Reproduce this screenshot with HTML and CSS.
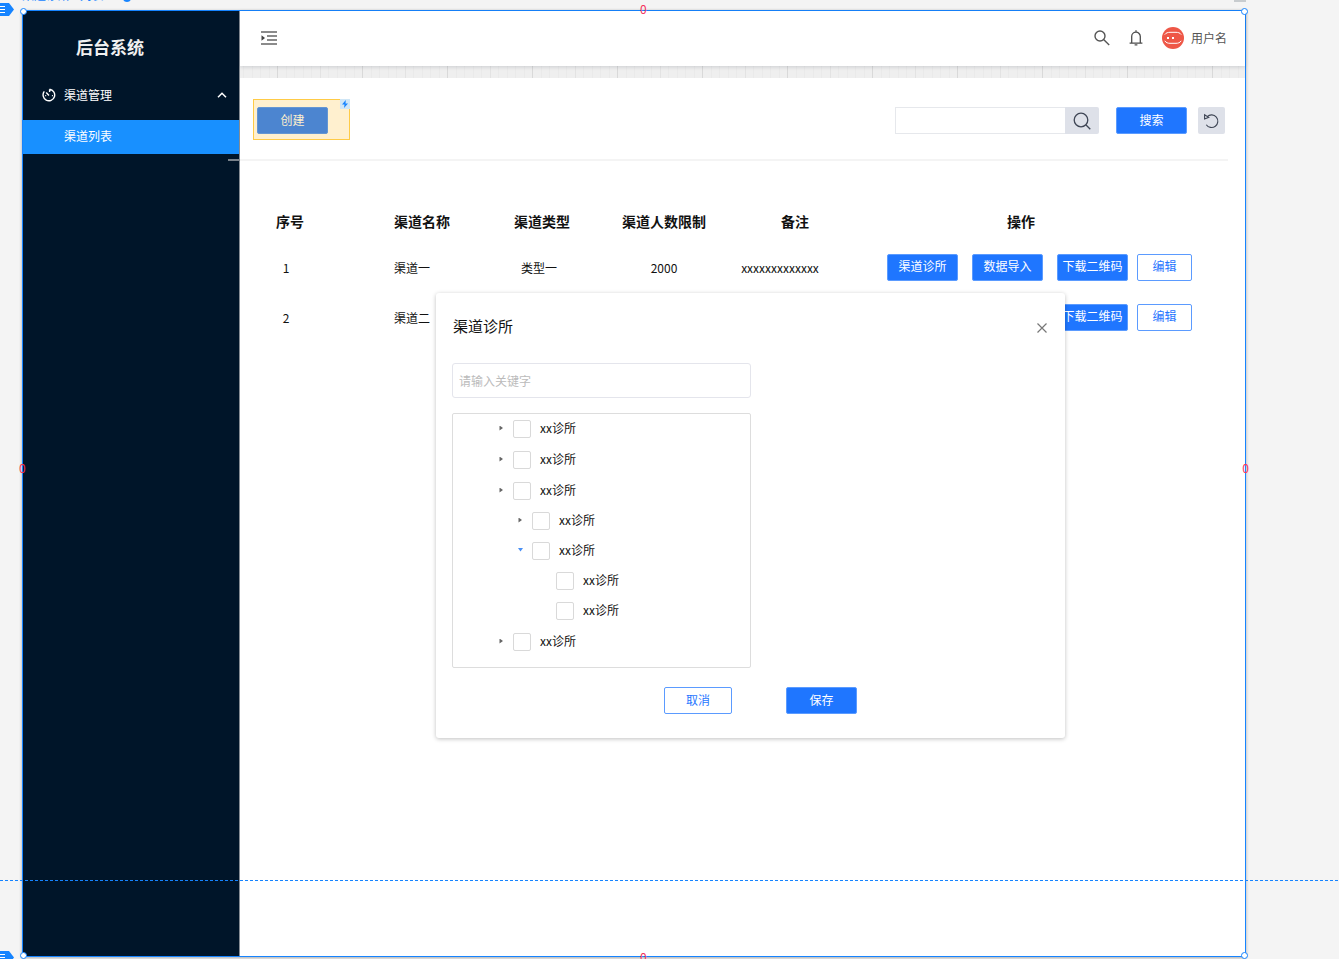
FILE: index.html
```html
<!DOCTYPE html>
<html lang="zh-CN">
<head>
<meta charset="utf-8">
<title>后台系统</title>
<link rel="stylesheet" href="styles.css">
</head>
<body>
<div class="workspace">
  <div class="page-label">渠道诊所 - 列表 <span class="page-dot"></span></div>
  <span class="page-tab"></span>

  <div class="artboard">
    <aside class="sidebar">
      <h1 class="brand">后台系统</h1>
      <nav>
        <button class="menu-group" type="button">
          <svg class="menu-icon" viewBox="0 0 14 14"><path d="M7.6 1.2V4M7.6 1.2A5.8 5.8 0 1 1 2.3 3.4M4.2 4.6 7 7.4M3.2 7.6h1M9.9 7.6h1M7 10.4h.1" fill="none" stroke="currentColor" stroke-width="1.4"/></svg>
          <span>渠道管理</span>
          <svg class="menu-arrow" viewBox="0 0 10 6"><path d="M1 5.2 5 1.2l4 4" fill="none" stroke="currentColor" stroke-width="1.5"/></svg>
        </button>
        <a class="menu-item" href="#">渠道列表</a>
      </nav>
    </aside>

    <main class="main">
      <header class="topbar">
        <button class="icon-button" type="button" aria-label="折叠菜单">
          <svg width="16" height="14" viewBox="0 0 16 14"><path d="M0 1h16M6 5h10M6 9h10M0 13h16" stroke="#666" stroke-width="1.4"/><path d="M.5 4.2v5.6L4 7z" fill="#444"/></svg>
        </button>
        <div class="topbar-right">
          <button class="icon-button" type="button" aria-label="查找">
            <svg width="16" height="16" viewBox="0 0 16 16"><g fill="none" stroke="#555" stroke-width="1.4"><circle cx="6" cy="6" r="5"/><path d="m9.6 9.6 5.6 5.4"/></g></svg>
          </button>
          <button class="icon-button" type="button" aria-label="通知">
            <svg width="14" height="16" viewBox="0 0 14 16"><g fill="none" stroke="#4d4d4d" stroke-width="1.3"><path d="M2.7 13V6.500a4.300 4.300 0 0 1 8.600 0V13M.6 13.200h12.800M7 .3v2M5.600 14.800h2.800"/></g></svg>
          </button>
          <div class="user">
            <svg width="22" height="22" viewBox="0 0 22 22"><circle cx="11" cy="11" r="11" fill="#ee5747"/><g fill="none" stroke="#fff" stroke-width="1"><path d="M2.800 7.600C4 5.800 6 5.300 8 5.300h6c2 0 4 .5 5.200 2.300M2.800 13.800C4 15.800 6 16.300 8 16.300h6c2 0 4-.5 5.200-2.500"/></g><path d="M5 9.900h2v2H5zM10 9.900h2v2h-2z" fill="#fff"/></svg>
            <span>用户名</span>
          </div>
        </div>
      </header>
      <div class="canvas-gap"></div>

      <section class="toolbar">
        <div class="hotspot">
          <button class="btn primary muted" type="button">创建</button>
          <span class="hotspot-mark"><svg width="8" height="8" viewBox="0 0 8 8"><path d="M4.800 0 1 4.500h2.500L3 8l4-4.500H4.500z" fill="#1684ff"/></svg></span>
        </div>
        <form class="search">
          <div class="search-field">
            <input type="text" aria-label="搜索内容">
            <button class="field-button" type="button" aria-label="查询">
              <svg width="18" height="18" viewBox="0 0 18 18"><g fill="none" stroke="#3f4655" stroke-width="1.300"><circle cx="8" cy="8" r="6.800"/><path d="m12.800 12.800 4.500 4.500"/></g></svg>
            </button>
          </div>
          <button class="btn primary" type="button">搜索</button>
          <button class="reset" type="button" aria-label="重置">
            <svg width="16" height="16" viewBox="0 0 16 16"><g fill="none" stroke="#3f4655" stroke-width="1.100"><path d="M3.200 3.600A6.300 6.300 0 1 1 2.300 11.700M.6 1.800v4.200L4.700 4.300z"/></g></svg>
          </button>
        </form>
      </section>
      <div class="divider"></div>

      <table class="channels">
        <colgroup><col class="c-no"><col class="c-name"><col class="c-type"><col class="c-limit"><col class="c-note"><col class="c-ops"><col></colgroup>
        <thead>
          <tr><th>序号</th><th>渠道名称</th><th>渠道类型</th><th class="limit">渠道人数限制</th><th class="note-head">备注</th><th>操作</th><td></td></tr>
        </thead>
        <tbody>
          <tr>
            <td class="no">1</td><td class="name">渠道一</td><td class="type">类型一</td><td class="limit">2000</td><td class="note">xxxxxxxxxxxxx</td>
            <td><div class="ops"><button class="btn primary" type="button">渠道诊所</button><button class="btn primary" type="button">数据导入</button><button class="btn primary" type="button">下载二维码</button><button class="btn outline edit" type="button">编辑</button></div></td><td></td>
          </tr>
          <tr>
            <td class="no">2</td><td class="name">渠道二</td><td></td><td></td><td></td>
            <td><div class="ops"><button class="btn primary" type="button">渠道诊所</button><button class="btn primary" type="button">数据导入</button><button class="btn primary" type="button">下载二维码</button><button class="btn outline edit" type="button">编辑</button></div></td><td></td>
          </tr>
        </tbody>
      </table>

      <section class="dialog" role="dialog" aria-labelledby="dialog-title">
        <div class="dialog-head">
          <h2 id="dialog-title">渠道诊所</h2>
          <button class="icon-button" type="button" aria-label="关闭">
            <svg width="10" height="10" viewBox="0 0 10 10"><path d="m.5.500 9 9M9.500.500l-9 9" stroke="#777" stroke-width="1.200"/></svg>
          </button>
        </div>
        <input class="keyword" type="text" placeholder="请输入关键字" aria-label="关键字">
        <ul class="tree">
          <li><div class="node"><i class="caret"></i><label><input type="checkbox">xx诊所</label></div></li>
          <li><div class="node"><i class="caret"></i><label><input type="checkbox">xx诊所</label></div></li>
          <li>
            <div class="node"><i class="caret"></i><label><input type="checkbox">xx诊所</label></div>
            <ul class="level-two">
              <li><div class="node"><i class="caret"></i><label><input type="checkbox">xx诊所</label></div></li>
              <li>
                <div class="node"><i class="caret open"></i><label><input type="checkbox">xx诊所</label></div>
                <ul class="level-three">
                  <li><div class="node"><i class="caret none"></i><label><input type="checkbox">xx诊所</label></div></li>
                  <li><div class="node"><i class="caret none"></i><label><input type="checkbox">xx诊所</label></div></li>
                </ul>
              </li>
            </ul>
          </li>
          <li><div class="node"><i class="caret"></i><label><input type="checkbox">xx诊所</label></div></li>
        </ul>
        <div class="dialog-foot">
          <button class="btn outline" type="button">取消</button>
          <button class="btn primary" type="button">保存</button>
        </div>
      </section>
    </main>

    <span class="handle top left"></span>
    <span class="handle top right"></span>
    <span class="handle bottom left"></span>
    <span class="handle bottom right"></span>
    <span class="distance on-top">0</span>
    <span class="distance on-bottom">0</span>
    <span class="distance on-left">0</span>
    <span class="distance on-right">0</span>
  </div>

  <span class="tag tag-top"><svg width="14" height="13" viewBox="0 0 14 13"><path d="M0 0h9l5 6.500L9 13H0z" fill="#1684ff"/><path d="M0 3.500h5M0 6.500h5M0 9.500h5" stroke="#fff"/></svg></span>
  <span class="tag tag-bottom"><svg width="14" height="13" viewBox="0 0 14 13"><path d="M0 0h9l5 6.500L9 13H0z" fill="#1684ff"/><path d="M0 3.500h5M0 6.500h5M0 9.500h5" stroke="#fff"/></svg></span>
  <span class="guide"></span>
</div>
</body>
</html>
```
FILE: styles.css
```css
* { box-sizing: border-box; }

body {
  margin: 0;
  background: #f4f4f4;
  color: #111;
  font: 12px/18px "Noto Sans CJK SC", sans-serif;
}

button, input { margin: 0; font: inherit; }
button { padding: 0; border: 0; background: none; cursor: pointer; }
ul { margin: 0; padding: 0; list-style: none; }
svg { display: block; }

.workspace {
  position: relative;
  display: flex;
  min-height: 100vh;
  padding: 10px 93px 2px 22px;
  overflow: hidden;
}

.artboard {
  position: relative;
  display: grid;
  flex: 1;
  grid-template-columns: 217px minmax(0, 1fr);
  border: 1px solid #1684ff;
  background: #fff;
  box-shadow: 0 1px 3px rgba(0, 0, 0, .3);
}

/* Sidebar */
.sidebar { border-right: 1px solid #858c94; background: #001529; color: #fff; }
.brand {
  margin: 0;
  padding: 23px 53px;
  color: #f0f0f0;
  font-size: 17px;
  line-height: 26px;
}
.menu-group {
  display: flex;
  align-items: center;
  width: 100%;
  height: 24px;
  margin-bottom: 13px;
  padding: 0 12px 0 19px;
  gap: 8px;
  color: #fff;
}
.menu-icon { width: 14px; height: 14px; }
.menu-arrow { width: 10px; height: 6px; margin-left: auto; }
.menu-item {
  display: block;
  padding: 7px 41px 9px;
  background: #1890ff;
  color: #fff;
  text-decoration: none;
}

/* Header */
.main { position: relative; }
.topbar {
  position: relative;
  display: flex;
  align-items: center;
  justify-content: space-between;
  height: 55px;
  padding: 0 18px 2px 21px;
  background: #fff;
  box-shadow: 0 1px 4px rgba(0, 21, 41, .15);
}
.topbar-right { display: flex; align-items: center; gap: 19px; }
.user { display: flex; align-items: center; gap: 7px; color: #555; }
.canvas-gap {
  height: 12px;
  background:
    repeating-linear-gradient(90deg, transparent 0 37px, #d9d9d9 37px 38px, transparent 38px 80px, #e3e3e3 80px 81px, transparent 81px 85px),
    repeating-linear-gradient(90deg, transparent 0 3px, #eaeaea 3px 4px, transparent 4px 12px, #eaeaea 12px 13px, transparent 13px 17px),
    #efefef;
}

/* Buttons */
.btn {
  width: 71px;
  height: 27px;
  padding-bottom: 2px;
  border: 1px solid #5b9bff;
  border-radius: 2px;
  white-space: nowrap;
}
.primary { background: #1f76ff; color: #fff; }
.outline { width: 68px; background: #fff; color: #1f76ff; }
.edit { width: 55px; }
.muted { border-color: #6596d2; background: #4c85d0; color: #fff0cd; }

/* Toolbar */
.toolbar {
  display: flex;
  justify-content: space-between;
  padding: 21px 20px 19px 13px;
}
.hotspot {
  position: relative;
  width: 97px;
  height: 41px;
  padding: 7px 3px;
  border: 1px solid #ffcb46;
  background: #fff0cf;
}
.hotspot-mark {
  position: absolute;
  top: -1px;
  right: -1px;
  padding: 1px;
  background: #cfe6f6;
}
.search { display: flex; padding-top: 8px; }
.search-field { display: flex; margin-right: 17px; }
.search-field input {
  width: 170px;
  height: 27px;
  padding: 0 8px;
  border: 1px solid #e6e8ec;
  border-right: 0;
}
.field-button, .reset {
  display: grid;
  place-items: center;
  width: 34px;
  height: 27px;
  border-radius: 0 2px 2px 0;
  background: #dee1e9;
}
.reset { width: 27px; margin-left: 11px; border-radius: 2px; }
.divider {
  position: relative;
  height: 2px;
  margin: 0 17px 0 -12px;
  background: linear-gradient(90deg, #78818a 12px, #f4f4f4 12px);
}

/* Channel table */
.channels { width: 100%; border-spacing: 0; table-layout: fixed; text-align: center; }
.channels th { height: 81px; padding: 39px 0 0; font-size: 14px; line-height: 20px; white-space: nowrap; }
.channels td { height: 50px; padding: 0; white-space: nowrap; }
.c-no { width: 100px; }
.c-name { width: 164px; }
.c-type { width: 76px; }
.c-limit { width: 154px; }
.c-note { width: 108px; }
.c-ops { width: 358px; }
.channels tbody .no { padding: 2px 8px 0 0; }
.channels tbody .name { padding: 2px 20px 0 0; }
.channels tbody .type { padding: 2px 6px 0 0; }
.channels tbody .limit { padding-top: 2px; }
.channels .limit, .channels .note-head { padding-left: 14px; }
.channels tbody .note { padding: 2px 16px 0 0; }
.ops { display: flex; padding-left: 45px; gap: 14px; }
.ops .edit { margin-left: -5px; }

/* Dialog */
.dialog {
  position: absolute;
  top: 282px;
  right: 180px;
  left: 196px;
  padding: 20px 16px 24px;
  border-radius: 3px;
  background: #fff;
  box-shadow: 0 1px 4px rgba(0, 0, 0, .25);
}
.dialog-head {
  display: flex;
  align-items: center;
  justify-content: space-between;
  margin-bottom: 20px;
  padding: 0 2px 0 1px;
}
.dialog-head h2 { margin: 0; padding-bottom: 5px; font-size: 15px; font-weight: 400; line-height: 25px; }
.keyword {
  display: block;
  width: 299px;
  height: 35px;
  padding: 0 6px;
  border: 1px solid #e4e5ec;
  border-radius: 3px;
}
.keyword::placeholder { color: #bbb; }
.tree {
  width: 299px;
  height: 255px;
  margin: 15px 0 19px;
  border: 1px solid #ddd;
  border-radius: 2px;
}
.node { display: flex; align-items: center; height: 30px; padding-left: 46px; gap: 9px; }
.tree > li + li { margin-top: 1px; }
.node label { display: flex; align-items: flex-start; gap: 9px; line-height: 16px; }
.node input {
  width: 18px;
  height: 18px;
  border: 1px solid #d9d9d9;
  border-radius: 2px;
  background: #fff;
  appearance: none;
}
.caret { width: 5px; height: 5px; margin-bottom: 2px; background: #666; clip-path: polygon(10% 0, 80% 50%, 10% 100%); }
.caret.open { background: #4a90f5; clip-path: polygon(0 10%, 100% 10%, 50% 80%); }
.caret.none { visibility: hidden; }
.level-two { padding-left: 19px; }
.level-three { padding-left: 24px; }
.dialog-foot { display: flex; padding-left: 212px; gap: 54px; }

/* Editor overlays */
.page-label {
  position: absolute;
  top: -13px;
  left: 22px;
  display: flex;
  align-items: center;
  height: 16px;
  gap: 19px;
  color: #1684ff;
}
.page-dot { width: 8px; height: 8px; margin-top: 6px; border-radius: 50%; background: #1684ff; }
.page-tab { position: absolute; top: 0; right: 93px; width: 12px; height: 2px; background: #c8cccf; }
.handle {
  position: absolute;
  width: 7px;
  height: 7px;
  border: 1px solid #1684ff;
  border-radius: 50%;
  background: #fff;
}
.top { top: -3px; }
.bottom { bottom: -3px; }
.left { left: -3px; }
.right { right: -3px; }
.distance { position: absolute; color: #f5325c; line-height: 12px; }
.on-top { top: -8px; left: 617px; }
.on-bottom { bottom: -7px; left: 617px; }
.on-left { top: 451px; left: -4px; }
.on-right { top: 451px; right: -4px; }
.tag { position: absolute; left: 0; }
.tag-top { top: 3px; }
.tag-bottom { bottom: -5px; }
.guide {
  position: absolute;
  right: 0;
  bottom: 78px;
  left: 0;
  height: 1px;
  background: repeating-linear-gradient(90deg, #1684ff 0 3px, transparent 3px 5px);
}
```
